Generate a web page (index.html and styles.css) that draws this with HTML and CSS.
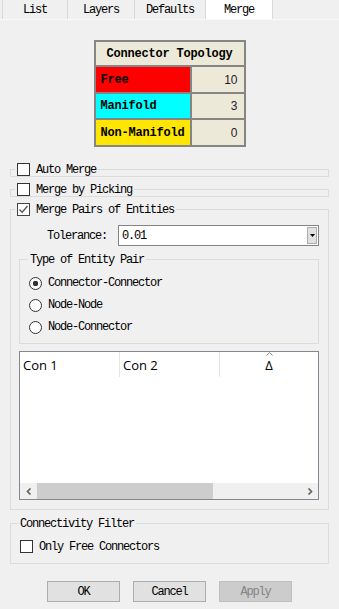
FILE: index.html
```html
<!DOCTYPE html>
<html lang="en">
<head>
  <meta charset="UTF-8" />
  <title>Merge</title>
  <link rel="stylesheet" href="styles.css">
</head>
<body>

  <div class="tabs">
    <div class="tab">List</div>
    <div class="tab">Layers</div>
    <div class="tab">Defaults</div>
    <div class="tab active">Merge</div>
  </div>

  <div class="panel">
    <div class="topo">
      <div class="topo-head">Connector Topology</div>
      <div class="topo-name free">Free</div><div class="topo-num">10</div>
      <div class="topo-name manifold">Manifold</div><div class="topo-num">3</div>
      <div class="topo-name nonmanifold">Non-Manifold</div><div class="topo-num">0</div>
    </div>

    <fieldset class="grp first">
      <legend><span class="lg"><span class="check"></span>Auto Merge</span></legend>
    </fieldset>
    <fieldset class="grp">
      <legend><span class="lg"><span class="check"></span>Merge by Picking</span></legend>
    </fieldset>
    <fieldset class="grp">
      <legend><span class="lg"><span class="check checked"><svg width="11" height="11" viewBox="0 0 11 11"><path d="M1.5 5.5 L4.2 8.2 L9.5 2" fill="none" stroke="#555" stroke-width="1.3"/></svg></span>Merge Pairs of Entities</span></legend>
      <div class="pairs">
        <div class="tol-row">
          <span class="tol-label">Tolerance:</span>
          <div class="combo">
            <span class="combo-text">0.01</span>
            <span class="combo-btn"><svg width="5" height="3" viewBox="0 0 5 3"><path d="M0 0 H5 L2.5 3 Z" fill="#000"/></svg></span>
          </div>
        </div>

        <fieldset class="sub">
          <legend><span class="lg text">Type of Entity Pair</span></legend>
          <div class="radios">
            <div class="radio-row"><span class="radio on"></span>Connector-Connector</div>
            <div class="radio-row"><span class="radio"></span>Node-Node</div>
            <div class="radio-row"><span class="radio"></span>Node-Connector</div>
          </div>
        </fieldset>

        <div class="listview">
          <div class="lv-head">
            <div class="lv-col">Con 1</div>
            <div class="lv-col">Con 2</div>
            <div class="lv-col delta">
              <svg class="sort" width="7" height="4" viewBox="0 0 7 4"><path d="M0.5 3.5 L3.5 0.5 L6.5 3.5" fill="none" stroke="#8a8a8a" stroke-width="1"/></svg>
              Δ
            </div>
          </div>
          <div class="lv-body"></div>
          <div class="hscroll">
            <span class="arrow"><svg width="6" height="7" viewBox="0 0 6 7"><path d="M4.5 0.5 L1.5 3.5 L4.5 6.5" fill="none" stroke="#606060" stroke-width="1.6"/></svg></span>
            <span class="thumb"></span>
            <span class="track"></span>
            <span class="arrow"><svg width="6" height="7" viewBox="0 0 6 7"><path d="M1.5 0.5 L4.5 3.5 L1.5 6.5" fill="none" stroke="#606060" stroke-width="1.6"/></svg></span>
          </div>
        </div>
      </div>
    </fieldset>

    <fieldset class="grp filter">
      <legend><span class="lg text">Connectivity Filter</span></legend>
      <div class="filter-body">
        <div class="check-row"><span class="check"></span>Only Free Connectors</div>
      </div>
    </fieldset>

    <div class="buttons">
      <button>OK</button>
      <button>Cancel</button>
      <button disabled>Apply</button>
    </div>
  </div>

</body>
</html>
```

FILE: styles.css
```css
html, body {
  margin: 0;
  padding: 0;
  background-color: #f0f0f0;
  color: #000;
  font-family: "Liberation Mono", monospace;
  font-size: 12px;
  letter-spacing: -1.2px;
}
.tabs {
  display: flex;
  height: 19px;
  padding-left: 2px;
  border-bottom: 1px solid #f9f9f9;
}
.tab {
  flex: none;
  box-sizing: border-box;
  height: 19px;
  line-height: 21px;
  text-align: center;
  border-left: 1px solid #d9d9d9;
  background-color: #f0f0f0;
}
.tab:nth-child(1) { width: 65px; }
.tab:nth-child(2) { width: 67px; }
.tab:nth-child(3) { width: 71px; }
.tab:nth-child(4) { width: 68px; border-right: 1px solid #d9d9d9; }
.tab.active {
  background-color: #fff;
}
.panel {
  padding-top: 20px;
}
.topo {
  display: grid;
  grid-template-columns: 94px 52px;
  grid-template-rows: 23px 25px 24px 25px;
  gap: 2px;
  padding: 2px;
  width: 148px;
  margin: 0 auto;
  background-color: #858585;
  font-weight: bold;
  letter-spacing: -0.2px;
}
.topo-head {
  grid-column: 1 / 3;
  background-color: #ece9d8;
  text-align: center;
  line-height: 24px;
}
.topo-name {
  padding-left: 5px;
  display: flex;
  align-items: center;
}
.free { background-color: #ff0000; }
.manifold { background-color: #00ffff; }
.nonmanifold { background-color: #ffe600; }
.topo-num {
  background-color: #ece9d8;
  display: flex;
  align-items: center;
  justify-content: flex-end;
  padding-right: 6px;
  font-family: "Liberation Sans", sans-serif;
  font-weight: normal;
  letter-spacing: 0;
  font-size: 12px;
  color: #1c1c30;
}
fieldset {
  border: 1px solid #dcdcdc;
  margin: 0;
  padding: 0;
  min-width: 0;
}
legend {
  padding: 0 2px;
  height: 13px;
}
.lg {
  display: flex;
  align-items: center;
  height: 13px;
  line-height: 14px;
}
.grp {
  margin: 6px 10px 0 10px;
}
.grp legend {
  margin-left: 4px;
}
.grp.first {
  margin-top: 16px;
}
.check {
  box-sizing: border-box;
  width: 13px;
  height: 13px;
  border: 1px solid #333;
  background-color: #fff;
  margin-right: 6px;
  display: inline-flex;
  flex: none;
}
.check.checked {
  border-color: #444;
}
.pairs {
  padding: 9px 0 9px 8px;
}
.tol-row {
  display: flex;
  align-items: center;
  height: 21px;
  padding-left: 28px;
}
.tol-label {
  margin-right: 11px;
}
.combo {
  box-sizing: border-box;
  width: 201px;
  height: 21px;
  border: 1px solid #838383;
  background-color: #fff;
  display: flex;
  align-items: center;
}
.combo-text {
  flex: 1;
  padding-left: 3px;
}
.combo-btn {
  box-sizing: border-box;
  width: 10px;
  height: 17px;
  margin-right: 1px;
  background-color: #e1e1e1;
  border: 1px solid #adadad;
  display: flex;
  align-items: center;
  justify-content: center;
}
.sub {
  width: 300px;
  box-sizing: border-box;
  margin-top: 7px;
}
.sub legend {
  margin-left: 8px;
}
.radios {
  padding: 6px 0 5px 9px;
}
.radio-row {
  display: flex;
  align-items: center;
  height: 22px;
}
.radio {
  box-sizing: border-box;
  width: 13px;
  height: 13px;
  border: 1px solid #333;
  border-radius: 50%;
  background-color: #fff;
  margin-right: 6px;
  flex: none;
}
.radio.on {
  background: radial-gradient(circle, #333 0 2.6px, #fff 3px);
}
.listview {
  box-sizing: border-box;
  width: 300px;
  height: 149px;
  margin-top: 7px;
  border: 1px solid #828790;
  background-color: #fff;
  display: flex;
  flex-direction: column;
  font-family: "Open Sans", sans-serif;
  font-size: 13px;
  letter-spacing: 0;
}
.lv-head {
  display: flex;
  height: 25px;
}
.lv-col {
  box-sizing: border-box;
  width: 100px;
  padding-left: 3px;
  line-height: 26px;
  border-right: 1px solid #e5e5e5;
}
.lv-col.delta {
  border-right: none;
  position: relative;
  padding-left: 0;
  text-align: center;
  width: 98px;
}
.sort {
  position: absolute;
  top: 0;
  left: 46px;
}
.lv-body {
  flex: 1;
}
.hscroll {
  display: flex;
  height: 16px;
  background-color: #f0f0f0;
}
.arrow {
  width: 17px;
  display: flex;
  align-items: center;
  justify-content: center;
}
.thumb {
  width: 176px;
  background-color: #cdcdcd;
}
.track {
  flex: 1;
}
.filter {
  margin-top: 7px;
}
.filter legend {
  margin-left: 7px;
}
.filter-body {
  padding: 10px 0 10px 9px;
}
.check-row {
  display: flex;
  align-items: center;
  height: 13px;
  line-height: 14px;
}
.buttons {
  display: flex;
  justify-content: center;
  gap: 13px;
  margin-top: 17px;
}
button {
  width: 73px;
  height: 21px;
  padding: 0;
  margin: 0;
  background-color: #e1e1e1;
  border: 1px solid #adadad;
  font-family: "Liberation Mono", monospace;
  font-size: 12px;
  letter-spacing: -1.2px;
  color: #000;
}
button:disabled {
  background-color: #cccccc;
  border-color: #bfbfbf;
  color: #838383;
}
```
